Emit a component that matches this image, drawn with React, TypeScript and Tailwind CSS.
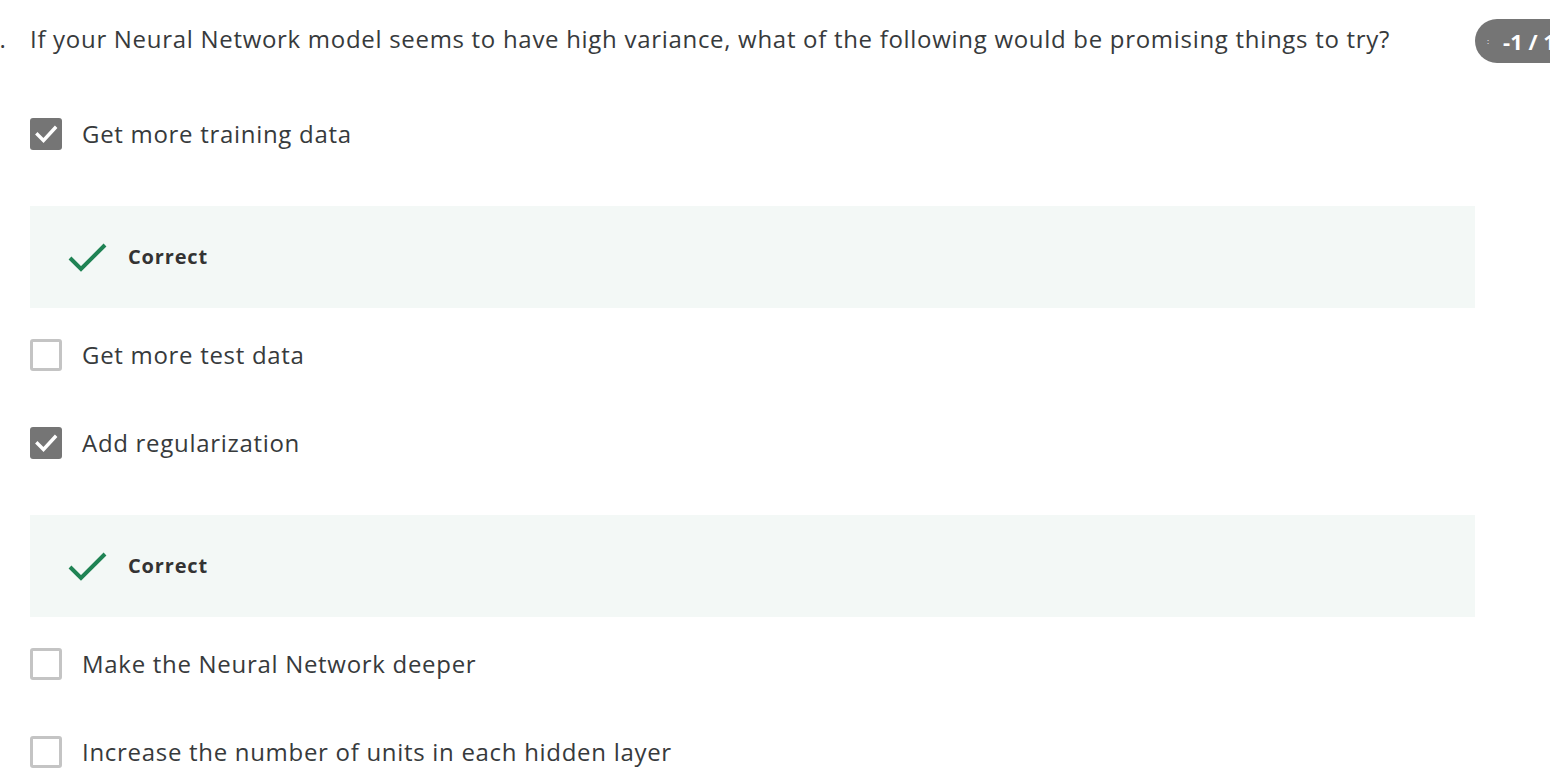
import React from "react";

type Option = {
  label: string;
  checked: boolean;
  feedback?: string;
};

const options: Option[] = [
  { label: "Get more training data", checked: true, feedback: "Correct" },
  { label: "Get more test data", checked: false },
  { label: "Add regularization", checked: true, feedback: "Correct" },
  { label: "Make the Neural Network deeper", checked: false },
  { label: "Increase the number of units in each hidden layer", checked: false },
];

const CheckBox = ({ checked }: { checked: boolean }) => {
  if (checked) {
    return (
      <span className="flex h-[32px] w-[32px] shrink-0 items-center justify-center rounded-[3px] bg-[#757575]">
        <svg width="24" height="24" viewBox="0 0 24 24" fill="none">
          <path d="M3.5 12.5l6 6L21 6" stroke="white" strokeWidth="3.4" strokeLinecap="square" />
        </svg>
      </span>
    );
  }
  return <span className="h-[32px] w-[32px] shrink-0 rounded-[3px] border-[3px] border-[#c4c4c4] bg-white" />;
};

const Feedback = ({ text }: { text: string }) => (
  <div className="mb-[27px] mt-[52px] flex h-[102px] items-center bg-[#f3f8f6] pl-[38px]">
    <svg width="40" height="30" viewBox="0 0 40 30" fill="none" className="shrink-0">
      <path d="M2 16l11 11L37 3" stroke="#1f8354" strokeWidth="4" />
    </svg>
    <span className="ml-[20px] text-[20px] font-bold tracking-[0.85px] text-[#333333]">{text}</span>
  </div>
);

export default function App() {
  return (
    <div
      className="flex h-[781px] w-[1550px] overflow-hidden bg-white text-[#373a3c]"
      style={{ fontFamily: '"Open Sans", "Liberation Sans", sans-serif' }}
    >
      <div className="w-[1475px] shrink-0 pl-[30px]">
        {/* Question */}
        <div className="mt-[21px] flex text-[24px] leading-[36px] tracking-[0.7px]">
          <span className="-ml-[45px] w-[45px] shrink-0">1.</span>
          <span>If your Neural Network model seems to have high variance, what of the following would be promising things to try?</span>
        </div>

        {/* Options */}
        <div className="mt-[57px]">
          {options.map((opt, i) => (
            <div key={i} className={opt.feedback ? "" : "mb-[48px]"}>
              <label className="flex h-[40px] items-center">
                <CheckBox checked={opt.checked} />
                <span className="ml-[20px] text-[24px] leading-[36px] tracking-[0.7px]">{opt.label}</span>
              </label>
              {opt.feedback && <Feedback text={opt.feedback} />}
            </div>
          ))}
        </div>
      </div>

      {/* Score badge */}
      <div className="mt-[19px] flex h-[44px] shrink-0 items-center whitespace-nowrap rounded-l-full bg-[#757575] pl-[12px] pr-[20px] text-white">
        <span className="text-[8px] leading-none">:</span>
        <span className="ml-[14px] text-[22px] font-bold">-1 / 1 point</span>
      </div>
    </div>
  );
}
